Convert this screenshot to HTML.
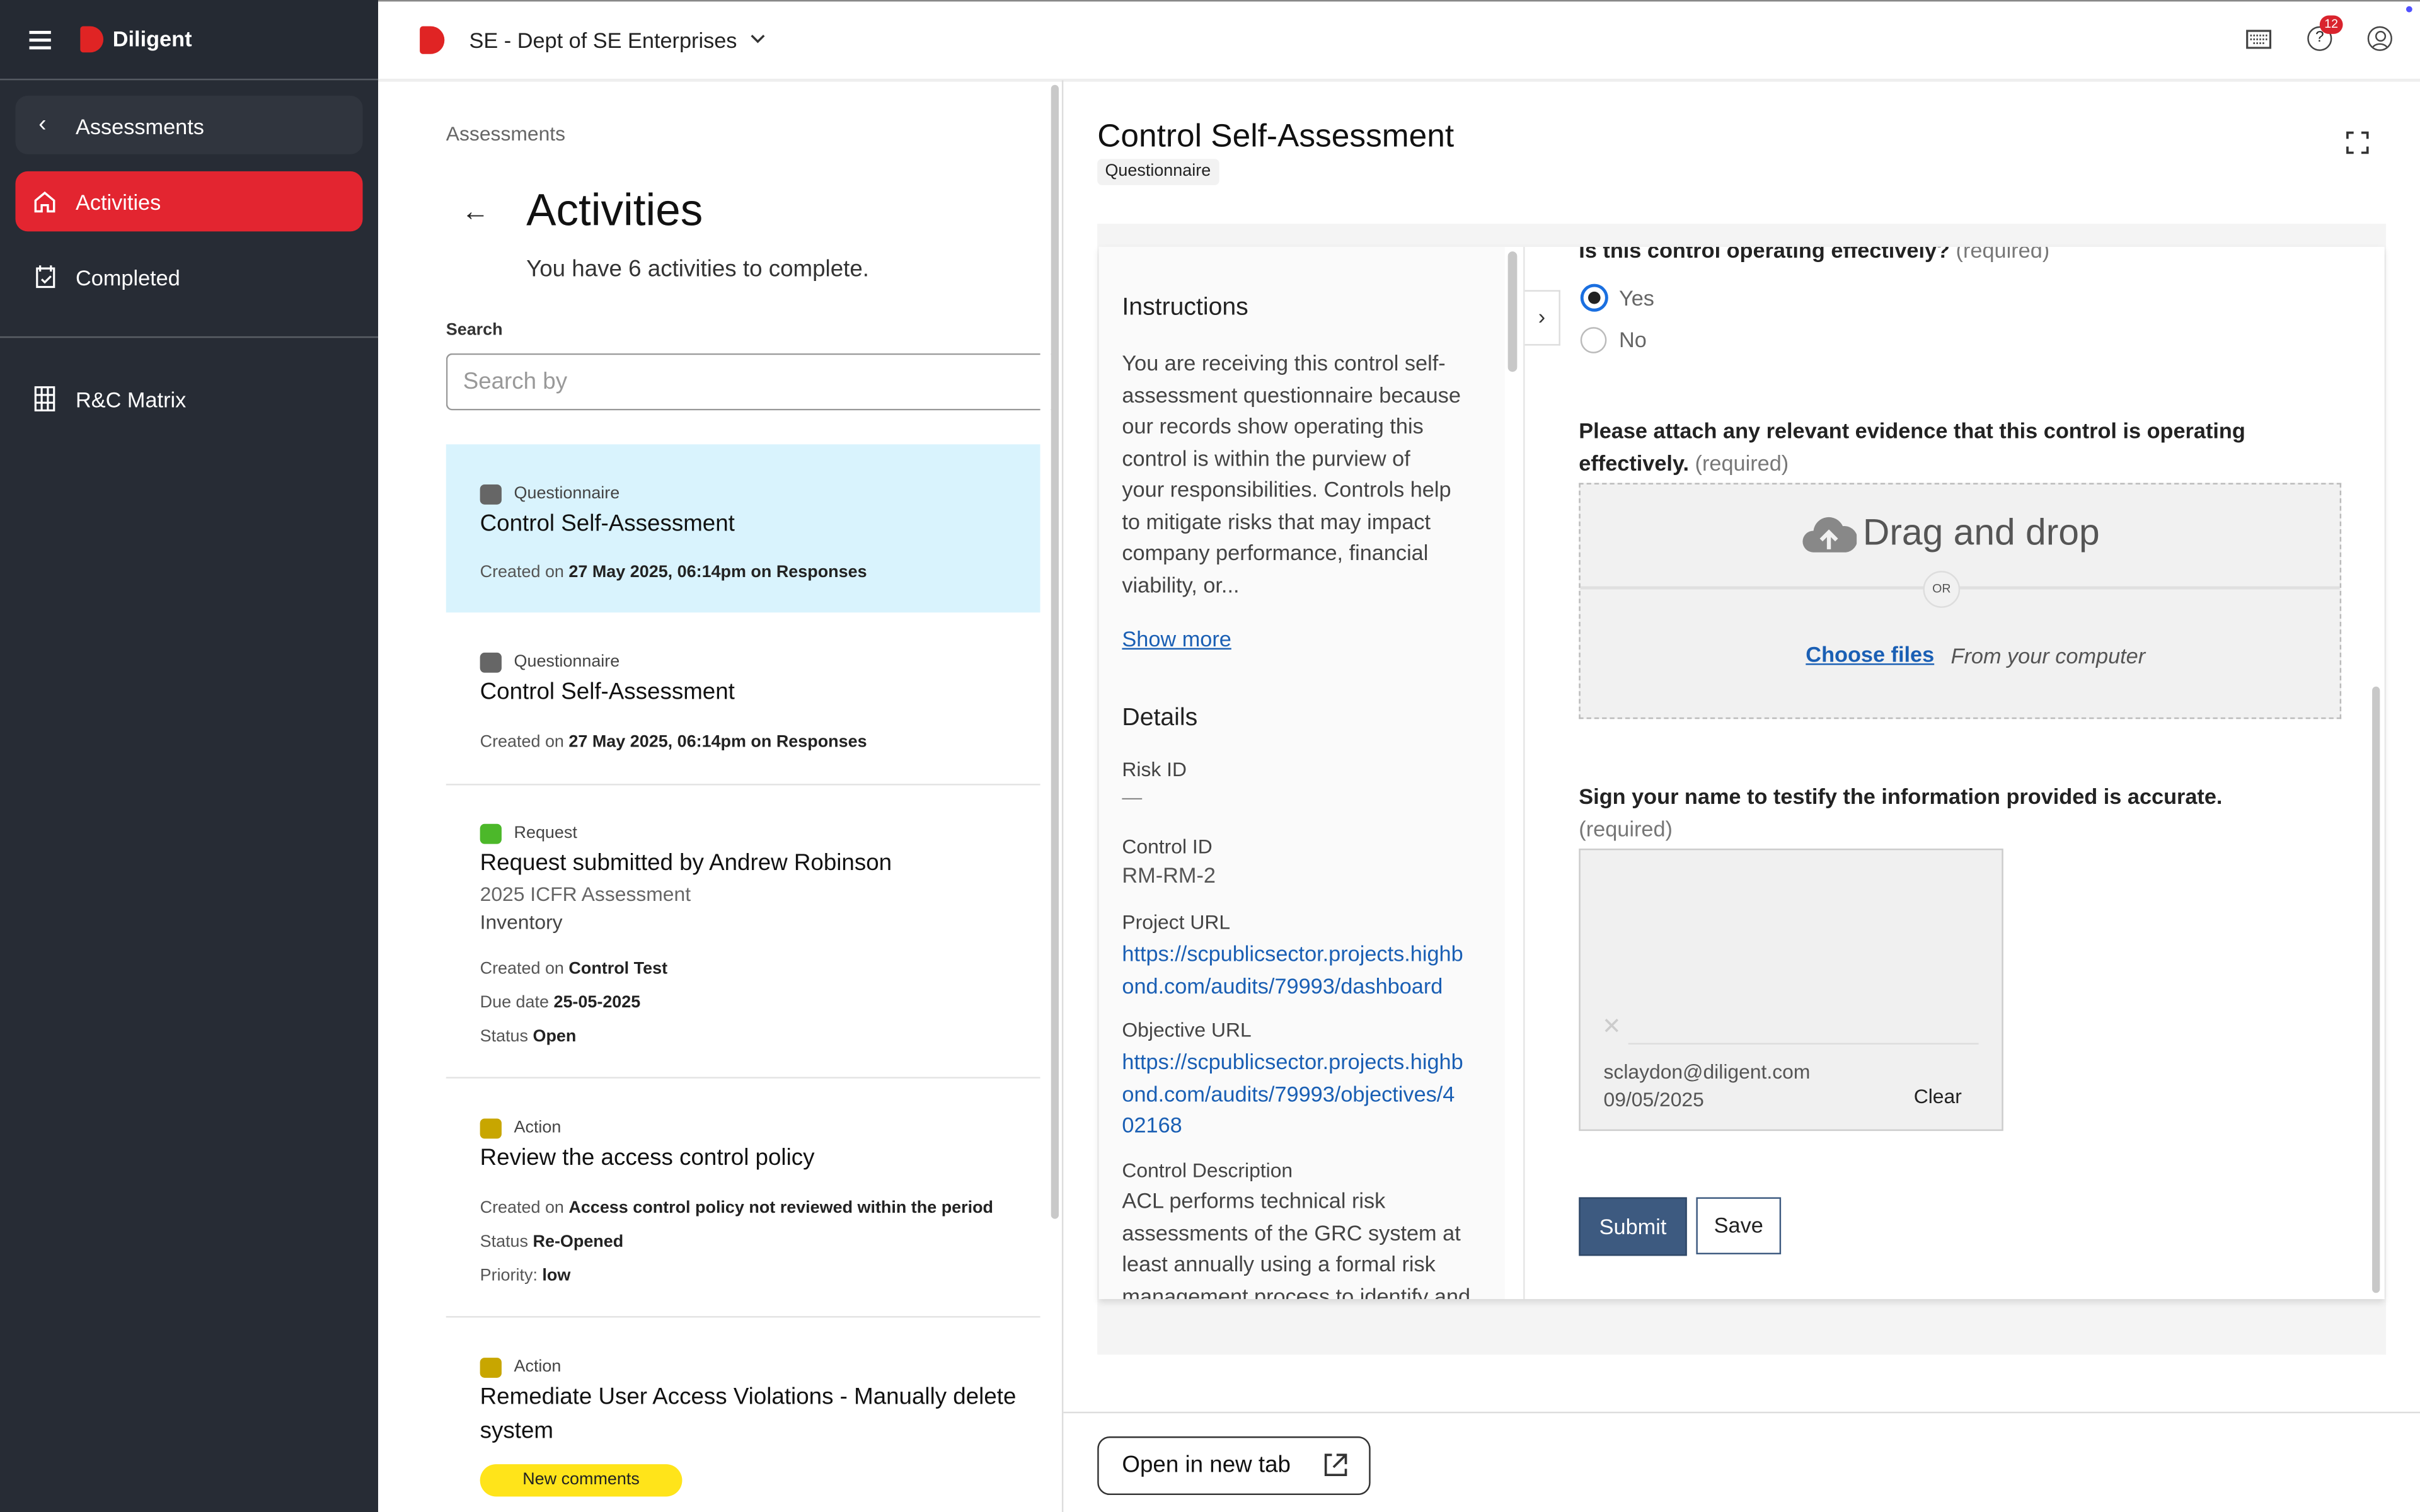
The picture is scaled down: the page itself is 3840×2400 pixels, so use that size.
<!DOCTYPE html>
<html><head><meta charset="utf-8">
<style>
html,body{margin:0;padding:0;width:3840px;height:2400px;overflow:hidden;background:#fff;}
#w{position:absolute;left:0;top:0;width:1568px;height:980px;transform:scale(2.44898);transform-origin:0 0;font-family:"Liberation Sans",sans-serif;color:#222;}
.a{position:absolute;white-space:nowrap;}
.sb{position:absolute;left:0;top:0;width:245px;height:980px;background:#272c35;}
.lk{color:#1a5fb4;}
.t{font-size:14px;color:#444;line-height:20.5px;}
.lb{font-size:13px;color:#444;}
</style></head><body><div id="w">
<!-- sidebar -->
<div class="sb"></div>
<div class="a" style="left:0;top:0;width:245px;height:51px;background:#252a33;border-bottom:1px solid #555a62"></div>
<div class="a" style="left:19px;top:20px;width:14px;height:2px;background:#fff;box-shadow:0 5px 0 #fff,0 10px 0 #fff"></div>
<div class="a" style="left:52px;top:17px;width:15px;height:17px;background:#e02424;border-radius:2px 9px 9px 2px"></div>
<div class="a" style="left:73px;top:17px;color:#fff;font-size:14px;font-weight:bold">Diligent</div>
<div class="a" style="left:10px;top:62px;width:225px;height:38px;background:#30353e;border-radius:8px"></div>
<div class="a" style="left:25px;top:72px;color:#fff;font-size:15px">&#8249;</div>
<div class="a" style="left:49px;top:74px;color:#fff;font-size:14px">Assessments</div>
<div class="a" style="left:10px;top:111px;width:225px;height:39px;background:#e32530;border-radius:8px"></div>
<svg class="a" style="left:21px;top:123px" width="16" height="16" viewBox="0 0 16 16"><path d="M2 7L8 2l6 5v7H10v-4H6v4H2z" fill="none" stroke="#fff" stroke-width="1.4"/></svg>
<div class="a" style="left:49px;top:123px;color:#fff;font-size:14px">Activities</div>
<svg class="a" style="left:21px;top:171px" width="17" height="18" viewBox="0 0 17 18"><path d="M3 3h11v12H3z M5 1v4 M12 1v4 M6 10l2 2 4-4" fill="none" stroke="#fff" stroke-width="1.3"/></svg>
<div class="a" style="left:49px;top:172px;color:#fff;font-size:14px">Completed</div>
<div class="a" style="left:0;top:218px;width:245px;height:1px;background:#5a5f66"></div>
<svg class="a" style="left:21px;top:250px" width="16" height="17" viewBox="0 0 16 17"><path d="M2 1h12v15H2z M2 6h12 M2 11h12 M6 1v15 M10 1v15" fill="none" stroke="#fff" stroke-width="1.3"/></svg>
<div class="a" style="left:49px;top:251px;color:#fff;font-size:14px">R&amp;C Matrix</div>
<!-- top bar -->
<div class="a" style="left:245px;top:0;width:1323px;height:1px;background:#888"></div>
<div class="a" style="left:245px;top:51px;width:1323px;height:2px;background:#eee"></div>
<div class="a" style="left:272px;top:17px;width:16px;height:18px;background:#e02424;border-radius:2px 9px 9px 2px"></div>
<div class="a" style="left:304px;top:18px;font-size:14px;color:#222">SE - Dept of SE Enterprises</div>
<svg class="a" style="left:486px;top:22px" width="10" height="7" viewBox="0 0 10 7"><path d="M1 1l4 4 4-4" fill="none" stroke="#333" stroke-width="1.4"/></svg>
<svg class="a" style="left:1455px;top:19px" width="17" height="13" viewBox="0 0 17 13"><path d="M1 1h15v11H1z" fill="none" stroke="#444" stroke-width="1.3"/><path d="M3 4h11 M3 6.5h11 M5 9h7" stroke="#444" stroke-width="1.2" stroke-dasharray="1 1"/></svg>
<div class="a" style="left:1495px;top:17px;width:14px;height:14px;border:1.4px solid #444;border-radius:50%;font-size:10px;text-align:center;line-height:14px">?</div>
<div class="a" style="left:1503px;top:10px;width:15px;height:12px;background:#d9232d;border-radius:7px;color:#fff;font-size:8px;text-align:center;line-height:12px">12</div>
<div class="a" style="left:1534px;top:17px;width:14px;height:14px;border:1.4px solid #444;border-radius:50%;overflow:hidden"><div style="position:absolute;left:4px;top:2px;width:5px;height:5px;border:1.2px solid #444;border-radius:50%"></div><div style="position:absolute;left:1px;top:10px;width:10px;height:8px;border:1.2px solid #444;border-radius:50%"></div></div>
<div class="a" style="left:1559px;top:4px;width:4px;height:4px;background:#5050ff;border-radius:50%"></div>
<!-- list panel -->
<div class="a" style="left:289px;top:79px;font-size:13px;color:#666">Assessments</div>
<div class="a" style="left:299px;top:127px;font-size:18px;color:#222">&#8592;</div>
<div class="a" style="left:341px;top:121px;font-size:29px;color:#111">Activities</div>
<div class="a" style="left:341px;top:166px;font-size:15px;color:#333">You have 6 activities to complete.</div>
<div class="a" style="left:289px;top:208px;font-size:11px;font-weight:bold;color:#333">Search</div>
<div class="a" style="left:289px;top:229px;width:392px;height:35px;border:1.5px solid #999;border-right:none;border-radius:4px 0 0 4px"></div>
<div class="a" style="left:300px;top:239px;font-size:15px;color:#999">Search by</div>
<div class="a" style="left:289px;top:288px;width:385px;height:109px;background:#d9f3fd"></div>
<div class="a" style="left:674px;top:55px;width:7px;height:925px;background:#fff"></div>
<div class="a" style="left:681px;top:55px;width:5px;height:735px;background:#c9c9c9;border-radius:3px"></div>
<div class="a" style="left:688px;top:52px;width:1px;height:928px;background:#ddd"></div>

<div class="a" style="left:311px;top:314px;width:14px;height:13px;background:#666;border-radius:3px"></div>
<div class="a" style="left:333px;top:314px;font-size:11px;color:#444">Questionnaire</div>
<div class="a" style="left:311px;top:331px;font-size:15px;color:#111">Control Self-Assessment</div>
<div class="a" style="left:311px;top:365px;font-size:11px;color:#555">Created on <b style="color:#222">27 May 2025, 06:14pm on Responses</b></div>

<div class="a" style="left:311px;top:423px;width:14px;height:13px;background:#666;border-radius:3px"></div>
<div class="a" style="left:333px;top:423px;font-size:11px;color:#444">Questionnaire</div>
<div class="a" style="left:311px;top:440px;font-size:15px;color:#111">Control Self-Assessment</div>
<div class="a" style="left:311px;top:475px;font-size:11px;color:#555">Created on <b style="color:#222">27 May 2025, 06:14pm on Responses</b></div>
<div class="a" style="left:289px;top:508px;width:385px;height:1px;background:#e3e3e3"></div>

<div class="a" style="left:311px;top:534px;width:14px;height:13px;background:#4cb82a;border-radius:3px"></div>
<div class="a" style="left:333px;top:534px;font-size:11px;color:#444">Request</div>
<div class="a" style="left:311px;top:551px;font-size:15px;color:#111">Request submitted by Andrew Robinson</div>
<div class="a" style="left:311px;top:572px;font-size:13px;color:#666">2025 ICFR Assessment</div>
<div class="a" style="left:311px;top:590px;font-size:13px;color:#444">Inventory</div>
<div class="a" style="left:311px;top:622px;font-size:11px;color:#555">Created on <b style="color:#222">Control Test</b></div>
<div class="a" style="left:311px;top:644px;font-size:11px;color:#555">Due date <b style="color:#222">25-05-2025</b></div>
<div class="a" style="left:311px;top:666px;font-size:11px;color:#555">Status <b style="color:#222">Open</b></div>
<div class="a" style="left:289px;top:698px;width:385px;height:1px;background:#e3e3e3"></div>

<div class="a" style="left:311px;top:725px;width:14px;height:13px;background:#c8a600;border-radius:3px"></div>
<div class="a" style="left:333px;top:725px;font-size:11px;color:#444">Action</div>
<div class="a" style="left:311px;top:742px;font-size:15px;color:#111">Review the access control policy</div>
<div class="a" style="left:311px;top:777px;font-size:11px;color:#555">Created on <b style="color:#222">Access control policy not reviewed within the period</b></div>
<div class="a" style="left:311px;top:799px;font-size:11px;color:#555">Status <b style="color:#222">Re-Opened</b></div>
<div class="a" style="left:311px;top:821px;font-size:11px;color:#555">Priority: <b style="color:#222">low</b></div>
<div class="a" style="left:289px;top:853px;width:385px;height:1px;background:#e3e3e3"></div>

<div class="a" style="left:311px;top:880px;width:14px;height:13px;background:#c8a600;border-radius:3px"></div>
<div class="a" style="left:333px;top:880px;font-size:11px;color:#444">Action</div>
<div style="position:absolute;left:311px;top:897px;width:363px;overflow:hidden;white-space:nowrap;font-size:15px;color:#111">Remediate User Access Violations - Manually delete</div>
<div class="a" style="left:311px;top:919px;font-size:15px;color:#111">system</div>
<div class="a" style="left:311px;top:949px;width:131px;height:21px;background:#ffe41a;border-radius:11px;font-size:11px;text-align:center;line-height:21px;color:#222">New comments</div>

<!-- right panel -->
<div class="a" style="left:711px;top:77px;font-size:21px;color:#111">Control Self-Assessment</div>
<div class="a" style="left:711px;top:103px;height:17px;padding:0 5px;background:#f2f2f2;border-radius:3px;font-size:11px;line-height:17px;color:#222">Questionnaire</div>
<svg class="a" style="left:1520px;top:85px" width="15" height="15" viewBox="0 0 15 15"><path d="M1 5V1h4 M10 1h4v4 M14 10v4h-4 M5 14H1v-4" fill="none" stroke="#333" stroke-width="1.5"/></svg>
<div class="a" style="left:711px;top:145px;width:835px;height:733px;background:#f4f4f4"></div>
<div class="a" style="left:712px;top:160px;width:833px;height:682px;background:#fff;box-shadow:0 2px 4px rgba(0,0,0,.12);overflow:hidden">
  <div class="a" style="left:0;top:0;width:263px;height:682px;background:#fafafa"></div>
  <div class="a" style="left:265px;top:3px;width:6px;height:78px;background:#c8c8c8;border-radius:3px"></div>
  <div class="a" style="left:275px;top:0;width:1px;height:682px;background:#e5e5e5"></div>
  <div class="a" style="left:15px;top:31px;font-size:16px;color:#222">Instructions</div>
  <div class="a t" style="left:15px;top:65px">You are receiving this control self-<br>assessment questionnaire because<br>our records show operating this<br>control is within the purview of<br>your responsibilities. Controls help<br>to mitigate risks that may impact<br>company performance, financial<br>viability, or...</div>
  <div class="a lk" style="left:15px;top:246px;font-size:14px;text-decoration:underline">Show more</div>
  <div class="a" style="left:15px;top:297px;font-size:16px;color:#222">Details</div>
  <div class="a lb" style="left:15px;top:331px">Risk ID</div>
  <div class="a" style="left:15px;top:349px;font-size:13px;color:#888">&#8212;</div>
  <div class="a lb" style="left:15px;top:381px">Control ID</div>
  <div class="a" style="left:15px;top:399px;font-size:14px;color:#555">RM-RM-2</div>
  <div class="a lb" style="left:15px;top:430px">Project URL</div>
  <div class="a lk t" style="left:15px;top:448px;color:#1a5fb4">https://scpublicsector.projects.highb<br>ond.com/audits/79993/dashboard</div>
  <div class="a lb" style="left:15px;top:500px">Objective URL</div>
  <div class="a lk t" style="left:15px;top:518px;color:#1a5fb4">https://scpublicsector.projects.highb<br>ond.com/audits/79993/objectives/4<br>02168</div>
  <div class="a lb" style="left:15px;top:591px">Control Description</div>
  <div class="a t" style="left:15px;top:608px">ACL performs technical risk<br>assessments of the GRC system at<br>least annually using a formal risk<br>management process to identify and</div>
  <div class="a" style="left:276px;top:28px;width:22px;height:34px;background:#fff;border:1px solid #ddd;border-left:none;font-size:14px;line-height:32px;text-align:center;color:#333">&#8250;</div>
  <div class="a" style="left:311px;top:-6px;font-size:14px;color:#222;font-weight:bold">Is this control operating effectively? <span style="font-weight:normal;color:#777">(required)</span></div>
  <div class="a" style="left:312px;top:24px;width:14px;height:14px;border:2px solid #1a6fe0;border-radius:50%;background:#fff"></div>
  <div class="a" style="left:317px;top:29px;width:8px;height:8px;background:#222;border-radius:50%"></div>
  <div class="a" style="left:337px;top:25px;font-size:14px;color:#666">Yes</div>
  <div class="a" style="left:312px;top:52px;width:15px;height:15px;border:1.3px solid #bbb;border-radius:50%"></div>
  <div class="a" style="left:337px;top:52px;font-size:14px;color:#666">No</div>
  <div class="a" style="left:311px;top:109px;font-size:14px;color:#222;font-weight:bold;line-height:21px">Please attach any relevant evidence that this control is operating<br>effectively. <span style="font-weight:normal;color:#777">(required)</span></div>
  <div class="a" style="left:311px;top:153px;width:492px;height:151px;background:#f1f1f1;border:1px dashed #bbb"></div>
  <div class="a" style="left:312px;top:220px;width:492px;height:2px;background:#e0e0e0"></div>
  <div class="a" style="left:534px;top:210px;width:22px;height:22px;background:#f1f1f1;border:1px solid #ddd;border-radius:50%;font-size:8px;text-align:center;line-height:22px;color:#555">OR</div>
  <svg class="a" style="left:455px;top:172px" width="36" height="28" viewBox="0 0 36 28"><path d="M8 26a7 7 0 0 1 0-14 10 10 0 0 1 19-3 8 8 0 0 1 2 17z" fill="#888"/><path d="M18 24v-10 M13 18l5-5 5 5" stroke="#f1f1f1" stroke-width="2.6" fill="none"/></svg>
  <div class="a" style="left:495px;top:172px;font-size:24px;color:#555">Drag and drop</div>
  <div class="a lk" style="left:458px;top:256px;font-size:14px;text-decoration:underline;font-weight:bold">Choose files</div>
  <div class="a" style="left:552px;top:257px;font-size:14px;font-style:italic;color:#555">From your computer</div>
  <div class="a" style="left:311px;top:346px;font-size:14px;color:#222;font-weight:bold;line-height:21px">Sign your name to testify the information provided is accurate.<br><span style="font-weight:normal;color:#777">(required)</span></div>
  <div class="a" style="left:311px;top:390px;width:273px;height:181px;background:#f0f0f0;border:1.5px solid #ccc"></div>
  <div class="a" style="left:326px;top:496px;font-size:15px;color:#ccc">&#10005;</div>
  <div class="a" style="left:343px;top:516px;width:227px;height:1px;background:#ddd"></div>
  <div class="a" style="left:327px;top:527px;font-size:13px;color:#555">sclaydon@diligent.com</div>
  <div class="a" style="left:327px;top:545px;font-size:13px;color:#555">09/05/2025</div>
  <div class="a" style="left:528px;top:543px;font-size:13px;color:#222">Clear</div>
  <div class="a" style="left:311px;top:616px;width:68px;height:36px;background:#3d5a80;border:1px solid #2f4868;color:#fff;font-size:14px;text-align:center;line-height:36px">Submit</div>
  <div class="a" style="left:387px;top:616px;width:53px;height:35px;background:#fff;border:1.5px solid #3d5a80;color:#222;font-size:14px;text-align:center;line-height:35px">Save</div>
  <div class="a" style="left:825px;top:285px;width:5px;height:393px;background:#c8c8c8;border-radius:3px"></div>
</div>
<div class="a" style="left:689px;top:915px;width:879px;height:1px;background:#ddd"></div>
<div class="a" style="left:711px;top:931px;width:175px;height:36px;border:1.5px solid #333;border-radius:8px"></div>
<div class="a" style="left:727px;top:941px;font-size:15px;color:#111">Open in new tab</div>
<svg class="a" style="left:857px;top:941px" width="17" height="17" viewBox="0 0 17 17"><path d="M6 2H2v13h13v-4 M9 2h6v6 M15 2L7 10" fill="none" stroke="#333" stroke-width="1.5"/></svg>
</div></body></html>
